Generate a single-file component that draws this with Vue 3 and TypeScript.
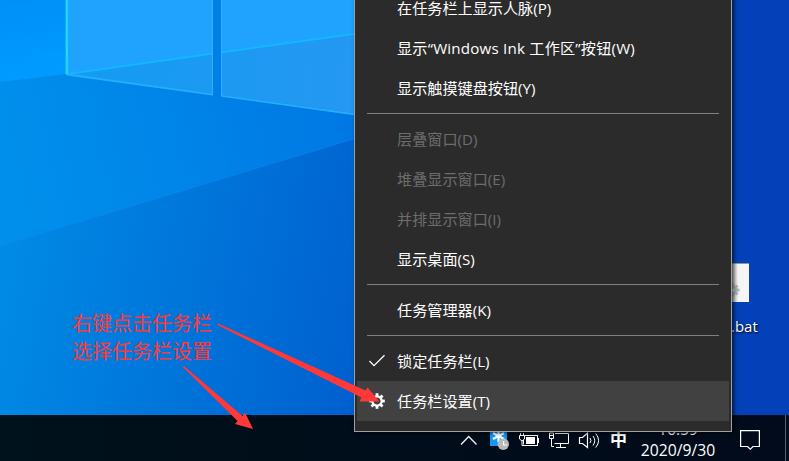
<script setup lang="ts">
interface MenuItem {
  label: string
  disabled?: boolean
  icon?: 'check' | 'gear'
  active?: boolean
  wide?: boolean
}

const groups: MenuItem[][] = [
  [
    { label: '在任务栏上显示人脉(P)' },
    { label: '显示“Windows Ink 工作区”按钮(W)', wide: true },
    { label: '显示触摸键盘按钮(Y)' },
  ],
  [
    { label: '层叠窗口(D)', disabled: true },
    { label: '堆叠显示窗口(E)', disabled: true },
    { label: '并排显示窗口(I)', disabled: true },
    { label: '显示桌面(S)' },
  ],
  [{ label: '任务管理器(K)' }],
  [
    { label: '锁定任务栏(L)', icon: 'check' },
    { label: '任务栏设置(T)', icon: 'gear', active: true },
  ],
]

const teeth: number[] = [0, 45, 90, 135, 180, 225, 270, 315]
</script>

<template>
  <div class="screen">
    <svg class="wallpaper" viewBox="0 0 789 461" aria-hidden="true">
      <defs>
        <linearGradient id="base" gradientUnits="userSpaceOnUse" x1="0" y1="240" x2="440" y2="330">
          <stop offset="0" stop-color="#008be6" />
          <stop offset="0.35" stop-color="#0079dc" />
          <stop offset="0.8" stop-color="#0062d0" />
          <stop offset="1" stop-color="#0350c4" />
        </linearGradient>
        <linearGradient id="beam" gradientUnits="userSpaceOnUse" x1="0" y1="190" x2="350" y2="110">
          <stop offset="0" stop-color="#0090ec" />
          <stop offset="0.45" stop-color="#0086e8" />
          <stop offset="1" stop-color="#0078e4" />
        </linearGradient>
        <linearGradient id="sky" gradientUnits="userSpaceOnUse" x1="0" y1="0" x2="14" y2="78">
          <stop offset="0" stop-color="#008ff8" />
          <stop offset="1" stop-color="#009bff" />
        </linearGradient>
        <linearGradient id="lower" gradientUnits="userSpaceOnUse" x1="66" y1="60" x2="360" y2="100">
          <stop offset="0" stop-color="#139bf2" />
          <stop offset="1" stop-color="#2598f3" />
        </linearGradient>
      </defs>
      <rect width="789" height="461" fill="url(#base)" />
      <path d="M0 60H360V137L0 246Z" fill="url(#beam)" />
      <path d="M0 246L360 137" stroke="#1688ef" stroke-opacity="0.5" fill="none" />
      <path d="M0 0H66V74L0 82Z" fill="url(#sky)" />
      <path d="M66 0H360V114L66 74Z" fill="url(#lower)" />
      <path d="M66 0H360V33L66 74Z" fill="#20a2ff" />
      <path d="M67 74L360 33" stroke="#14b6ff" stroke-width="2" fill="none" />
      <path d="M67 74.5L360 115" stroke="#25aefb" stroke-width="1.8" fill="none" />
      <path d="M213 0H221V98L213 96Z" fill="#007fe6" />
      <path d="M212.5 0V95M221.5 0V96" stroke="#2db1fc" fill="none" />
      <path d="M66.8 0V74.5" stroke="#20d6ff" stroke-width="2.4" fill="none" />
      <rect x="728" width="61" height="461" fill="#0440b8" />
    </svg>

    <div class="file">
      <div class="page">
        <svg width="17" height="37" viewBox="0 0 17 37">
          <g transform="translate(1 26)" fill="#a9b6bd">
            <rect v-for="a in teeth" :key="a" x="-1.4" y="-6.5" width="2.8" height="4" :transform="`rotate(${a})`" />
            <circle r="4.8" />
            <circle r="1.6" fill="#dfe4e6" />
          </g>
        </svg>
      </div>
      <span class="name">.bat</span>
    </div>

    <div class="note">右键点击任务栏<br />选择任务栏设置</div>

    <footer class="taskbar">
      <svg class="tray" width="178" height="46" viewBox="450 415 178 46">
        <path d="M461 444.5L468.7 436.5L476.5 444.5" fill="none" stroke="#eee" stroke-width="1.4" />
        <rect x="490" y="428" width="17" height="18" fill="#1296f0" />
        <path d="M498.5 430V442M493 433L504 439M493 439L504 433" stroke="#fff" stroke-width="2.2" />
        <circle cx="503.3" cy="444.3" r="5.7" fill="#b9b9b9" />
        <path d="M503.5 441V445H507" stroke="#fff" stroke-width="1.2" fill="none" />
        <g fill="none" stroke="#fff">
          <rect x="523.5" y="435.5" width="14" height="10" />
          <path d="M538.5 438V443" />
          <path d="M519.5 435.5H524.5V439L522 441L519.5 439ZM520.5 433V435M523.5 433V435M522 441V445.5H524" fill="#020b17" />
          <rect x="526.5" y="437.5" width="8" height="6" fill="#fff" />
          <path d="M555 433.5H568.5V443.5H554.5M560.5 444V447M556 447.5H566" />
          <path d="M549.5 433H553.5V438.5H549.5V433ZM551.5 439V446.5H554M549.5 435.5H553.5" />
          <path d="M579.5 437.5H582.5L587.5 433V447.5L582.5 443.5H579.5Z" stroke-width="1.2" />
          <path d="M590 438Q592 440.5 590 443M593 436Q596.5 440.5 593 445.5M595.7 433.5Q601.5 440.5 595.7 447.5" />
        </g>
      </svg>
      <span class="ime">中</span>
      <div class="clock"><span>16:59</span><span>2020/9/30</span></div>
      <svg class="action" width="22" height="24" viewBox="0 0 22 24">
        <path d="M0.6 0.6H19.4V16.5H13L10.3 19.2L7.6 16.5H0.6Z" fill="none" stroke="#fff" stroke-width="1.2" />
      </svg>
      <i class="peek"></i>
    </footer>

    <nav class="menu">
      <ul v-for="(group, g) in groups" :key="g" class="group">
        <li
          v-for="item in group"
          :key="item.label"
          class="item"
          :class="{ disabled: item.disabled, active: item.active, wide: item.wide }"
        >
          <span class="icon">
            <svg v-if="item.icon === 'check'" width="18" height="14" viewBox="0 0 18 14">
              <path d="M1.5 7L6 11.6L16.5 1.2" fill="none" stroke="#fff" stroke-width="1.3" />
            </svg>
            <svg v-else-if="item.icon === 'gear'" width="18" height="18" viewBox="-9 -9 18 18">
              <rect v-for="a in teeth" :key="a" x="-1.4" y="-7.8" width="2.8" height="3.4" fill="#fff" :transform="`rotate(${a})`" />
              <circle r="4.7" fill="none" stroke="#fff" stroke-width="2.2" />
            </svg>
          </span>
          <span>{{ item.label }}</span>
        </li>
      </ul>
    </nav>

    <svg class="arrows" viewBox="0 0 789 461" aria-hidden="true">
      <path d="M217.5 323.3L365.5 390.5L367.5 387.5L379.5 401.5L359.5 401.5L361.5 397.5L217.5 325Z" />
      <path d="M182.8 367L184 366L242.5 416L245 412.5L253 429L235 424L237.5 421Z" />
    </svg>
  </div>
</template>

<style>
body {
  margin: 0;
  overflow: hidden;
}
</style>

<style scoped>
.screen {
  position: relative;
  width: 789px;
  height: 461px;
  overflow: hidden;
  display: flex;
  flex-direction: column;
  justify-content: flex-end;
  font-family: 'Open Sans', 'Noto Sans CJK SC', sans-serif;
}
.wallpaper,
.arrows {
  position: absolute;
  inset: 0;
  width: 789px;
  height: 461px;
}
.arrows {
  fill: #ff3838;
  pointer-events: none;
}
.file {
  position: absolute;
  left: 732px;
  top: 263px;
  color: #fff;
}
.page {
  width: 17px;
  height: 38px;
  border-top: 1px solid #8795a8;
  background: linear-gradient(90deg, #c4c4c4, #f5f5f5 6px);
  overflow: hidden;
}
.page svg {
  display: block;
}
.name {
  display: block;
  margin: 13px 0 0 -1px;
  font-size: 15px;
  line-height: 22px;
  text-shadow: 1px 1px 2px #000;
}
.note {
  position: absolute;
  left: 72px;
  top: 309px;
  color: #ff3838;
  font-family: 'Noto Sans CJK SC', sans-serif;
  font-size: 20px;
  line-height: 28px;
  white-space: nowrap;
}
.taskbar {
  position: relative;
  display: flex;
  box-sizing: border-box;
  height: 46px;
  padding-left: 450px;
  background: linear-gradient(90deg, #00121b, #000d1a 45%, #020b1b);
  color: #fff;
}
.tray {
  flex: none;
  width: 178px;
  margin-right: -18px;
}
.ime {
  width: 17px;
  line-height: 50px;
  font-size: 17px;
  font-weight: 700;
}
.clock {
  display: flex;
  flex-direction: column;
  align-items: center;
  width: 102px;
  padding-top: 4px;
  font-size: 15.7px;
  line-height: 21px;
}
.action {
  flex: none;
  margin: 15px 0 0 11px;
}
.peek {
  margin-left: 23px;
  border-left: 1px solid #57616d;
}
.menu {
  position: absolute;
  left: 354px;
  top: -15px;
  box-sizing: border-box;
  width: 378px;
  height: 447px;
  padding: 2px;
  border: 1px solid #a0a0a0;
  background: #2b2b2b;
  box-shadow: 2px 1px 4px rgba(0, 0, 0, 0.65);
}
.group {
  margin: 0;
  padding: 0;
  list-style: none;
}
.group + .group::before {
  content: '';
  display: block;
  height: 1px;
  margin: 5px 10px;
  background: #808080;
}
.item {
  display: flex;
  align-items: center;
  height: 40px;
  color: #fff;
  font-size: 15.15px;
  line-height: 20px;
  white-space: pre;
}
.item.wide {
  letter-spacing: 0.2px;
}
.item.disabled {
  color: #6d6d6d;
}
.item.active {
  background: #414141;
}
.icon {
  display: flex;
  justify-content: center;
  width: 40px;
}
</style>
